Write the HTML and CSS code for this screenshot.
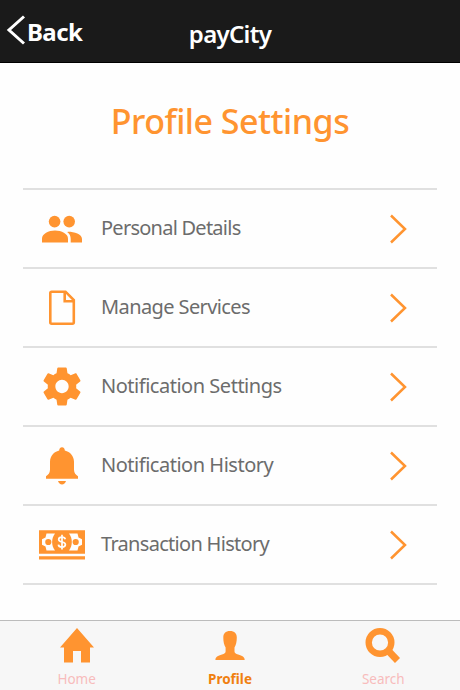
FILE: index.html
```html
<!DOCTYPE html>
<html>

<head>
    <meta charset="UTF-8">
    <title>payCity</title>
    <link rel="stylesheet" href="styles.css">
</head>

<body>
    <div class="app">
        <header class="header">
            <a class="back" href="#">
                <svg class="back-icon" width="20" height="32" viewBox="0 0 20 32">
                    <path d="M18 2.500L3 16L18 29.500" />
                </svg>
                <span>Back</span>
            </a>
            <div class="brand">payCity</div>
        </header>

        <main class="content">
            <h1>Profile Settings</h1>

            <ul class="menu">
                <li class="menu-item">
                    <svg class="menu-icon" viewBox="0 0 48 48">
                        <circle cx="16.600" cy="16.600" r="5.800" />
                        <circle cx="31.200" cy="16.600" r="5.800" />
                        <path d="M4 37.500v-4c0-4.600 6.600-8 13-8s13 3.400 13 8v4z" />
                        <path d="M30.200 26.700c6 0 13.800 2.400 13.800 7.200v3.600H32.700v-3.600c0-2.900-1-5.300-3.500-7z" />
                    </svg>
                    <span class="menu-text personal">Personal Details</span>
                    <svg class="chevron" viewBox="0 0 18 30"><path d="M2 1.500L16 15L2 28.500" /></svg>
                </li>
                <li class="menu-item">
                    <svg class="menu-icon" viewBox="0 0 48 48">
                        <path class="outline" d="M13.700 7.700h13.800l8.300 8.300v22.300q0 1.400-1.400 1.400H13.700q-1.400 0-1.400-1.400V9.100q0-1.400 1.400-1.400z" />
                        <path class="outline" d="M26.700 8v9.300h9" />
                    </svg>
                    <span class="menu-text services">Manage Services</span>
                    <svg class="chevron" viewBox="0 0 18 30"><path d="M2 1.500L16 15L2 28.500" /></svg>
                </li>
                <li class="menu-item">
                    <svg class="menu-icon" viewBox="0 0 48 48">
                        <g transform="translate(1.200 .700) scale(1.900)">
                            <path d="M19.430 12.980c.040-.320.070-.640.070-.980s-.030-.660-.070-.980l2.110-1.650c.190-.150.240-.420.120-.640l-2-3.460c-.120-.220-.390-.300-.610-.220l-2.490 1c-.520-.400-1.080-.730-1.690-.980l-.380-2.650C14.460 2.180 14.250 2 14 2h-4c-.250 0-.460.180-.490.420l-.380 2.650c-.610.250-1.170.590-1.690.980l-2.490-1c-.230-.090-.490 0-.610.220l-2 3.460c-.130.220-.070.490.120.640l2.110 1.650c-.040.320-.070.650-.070.980s.030.660.070.980l-2.110 1.650c-.190.150-.240.420-.120.640l2 3.460c.120.220.390.300.610.220l2.490-1c.520.400 1.080.730 1.690.980l.380 2.650c.030.240.240.420.490.420h4c.250 0 .460-.180.490-.420l.380-2.650c.610-.250 1.170-.590 1.690-.980l2.490 1c.230.090.490 0 .610-.220l2-3.460c.120-.220.070-.490-.120-.640l-2.110-1.650zM12 15.500c-1.930 0-3.500-1.570-3.500-3.500s1.570-3.500 3.500-3.500 3.500 1.570 3.500 3.500-1.570 3.500-3.500 3.500z" />
                        </g>
                    </svg>
                    <span class="menu-text notification">Notification Settings</span>
                    <svg class="chevron" viewBox="0 0 18 30"><path d="M2 1.500L16 15L2 28.500" /></svg>
                </li>
                <li class="menu-item">
                    <svg class="menu-icon" viewBox="0 0 48 48">
                        <path d="M24 5.200c1.800 0 2.800 1.400 2.800 3.300c5.400 1.500 9 5.200 9.200 11.200v8c.100 3.200 1.800 5 4 6.500v2.500H8v-2.500c2.200-1.500 3.900-3.300 4-6.500v-8c.200-6 3.800-9.700 9.200-11.200c0-1.900 1-3.300 2.800-3.300z" />
                        <path d="M20 39h8c-.700 2.300-2.200 3.500-4 3.500s-3.300-1.200-4-3.500z" />
                    </svg>
                    <span class="menu-text notification">Notification History</span>
                    <svg class="chevron" viewBox="0 0 18 30"><path d="M2 1.500L16 15L2 28.500" /></svg>
                </li>
                <li class="menu-item">
                    <svg class="menu-icon" viewBox="0 0 48 48">
                        <path d="M1 9.300h46v23.500H1zM1 35.300h46v3.200H1z" />
                        <path class="paper" d="M8.500 12.500h8.500c-3.800 5-3.800 12 0 17H8.500l-1-4-3.500-1.800v-5.400l3.500-1.800z" />
                        <path class="paper" d="M39.500 12.500H31c3.800 5 3.800 12 0 17h8.500l1-4 3.500-1.800v-5.400l-3.500-1.800z" />
                        <circle cx="10.300" cy="21" r="3.100" />
                        <circle cx="37.700" cy="21" r="3.100" />
                        <path class="dollar" d="M27.300 18.200c-.400-1.500-1.600-2.100-3.300-2.100c-2 0-3.300.900-3.300 2.400c0 3.400 6.700 1.700 6.700 5.100c0 1.600-1.400 2.500-3.400 2.500c-2 0-3.400-.800-3.600-2.500M24 13.800v14.600" />
                    </svg>
                    <span class="menu-text transaction">Transaction History</span>
                    <svg class="chevron" viewBox="0 0 18 30"><path d="M2 1.500L16 15L2 28.500" /></svg>
                </li>
            </ul>
        </main>

        <nav class="tabs">
            <a class="tab" href="#">
                <svg class="tab-icon" viewBox="0 0 40 40">
                    <path d="M20 1l17 19.500h-4V35.500h-9V24h-8v11.500H7V20.500H3z" />
                </svg>
                <span>Home</span>
            </a>
            <a class="tab active" href="#">
                <svg class="tab-icon" viewBox="0 0 40 40">
                    <path d="M20 4c4.500 0 6.800 2.400 6.800 6.500c0 4.500-.800 7.500-2.300 10v4c0 1.500 1.300 2.200 3.600 3.100c4.200 1.200 6.500 2.300 6.600 5.400H5.400c.100-3.100 2.400-4.200 6.600-5.400c2.300-.900 3.600-1.600 3.600-3.100v-4c-1.500-2.500-2.300-5.500-2.300-10C13.300 6.400 15.500 4 20 4z" />
                </svg>
                <span>Profile</span>
            </a>
            <a class="tab" href="#">
                <svg class="tab-icon" viewBox="0 0 40 40">
                    <circle class="lens" cx="17" cy="15.500" r="11.300" />
                    <path class="handle" d="M24.500 23l10 10.500" />
                </svg>
                <span>Search</span>
            </a>
        </nav>
    </div>
</body>

</html>
```
FILE: styles.css
```css
body {
    margin: 0;
    font-family: 'Noto Sans', 'Open Sans', sans-serif;
    background-color: #fefefe;
}

a {
    text-decoration: none;
}

.app {
    display: flex;
    flex-direction: column;
    height: 690px;
    overflow: hidden;
}

.header {
    display: grid;
    grid-template-columns: 1fr auto 1fr;
    box-sizing: border-box;
    height: 63px;
    background-color: #1a1a1a;
    border-bottom: 1px solid #000;
    color: #fff;
}

.back {
    display: flex;
    align-items: flex-start;
    gap: 1px;
    padding: 14px 0 0 6px;
    color: #fff;
    font-size: 24px;
    font-weight: 700;
    line-height: 36px;
    letter-spacing: -0.6px;
}

.back-icon {
    fill: none;
    stroke: #fff;
    stroke-width: 3;
}

.brand {
    padding-top: 16px;
    font-size: 24px;
    font-weight: 600;
    line-height: 36px;
    letter-spacing: -0.7px;
}

.content {
    flex: 1;
    padding: 0 23px;
}

h1 {
    margin: 0;
    padding-top: 33px;
    height: 92px;
    color: #ff9430;
    font-size: 34px;
    font-weight: 500;
    line-height: 50px;
    letter-spacing: -0.5px;
    text-align: center;
    white-space: nowrap;
}

.menu {
    margin: 0;
    padding: 0;
    list-style: none;
    border-top: 2px solid #e0e0e0;
}

.menu-item {
    display: flex;
    align-items: center;
    height: 77px;
    padding: 0 30px 0 15px;
    border-bottom: 2px solid #e0e0e0;
    color: #6c6c6c;
    font-size: 20px;
}

.menu-icon {
    width: 48px;
    height: 48px;
    margin-right: 15px;
    fill: #ff9430;
}

.menu-text {
    flex: 1;
    padding-bottom: 2px;
    white-space: nowrap;
}

.personal {
    letter-spacing: -0.75px;
}

.services {
    letter-spacing: -0.6px;
}

.notification {
    letter-spacing: -0.48px;
}

.transaction {
    letter-spacing: -0.7px;
}

.outline {
    fill: none;
    stroke: #ff9430;
    stroke-width: 2.600;
}

.paper {
    fill: #fefefe;
}

.dollar {
    fill: none;
    stroke: #fefefe;
    stroke-width: 1.700;
}

.chevron {
    width: 18px;
    height: 30px;
    fill: none;
    stroke: #ff9430;
    stroke-width: 2.500;
}

.tabs {
    display: grid;
    grid-template-columns: repeat(3, 1fr);
    box-sizing: border-box;
    height: 70px;
    background-color: #f7f7f7;
    border-top: 1px solid #bcbcbc;
}

.tab {
    display: flex;
    flex-direction: column;
    align-items: center;
    padding-top: 6px;
    color: #f8bcbc;
    font-size: 13.500px;
    line-height: 24px;
}

.tab.active {
    color: #f08010;
    font-weight: 700;
}

.tab-icon {
    width: 40px;
    height: 40px;
    fill: #ff9430;
}

.lens {
    fill: none;
    stroke: #ff9430;
    stroke-width: 6.400;
}

.handle {
    fill: none;
    stroke: #ff9430;
    stroke-width: 7;
}
```
